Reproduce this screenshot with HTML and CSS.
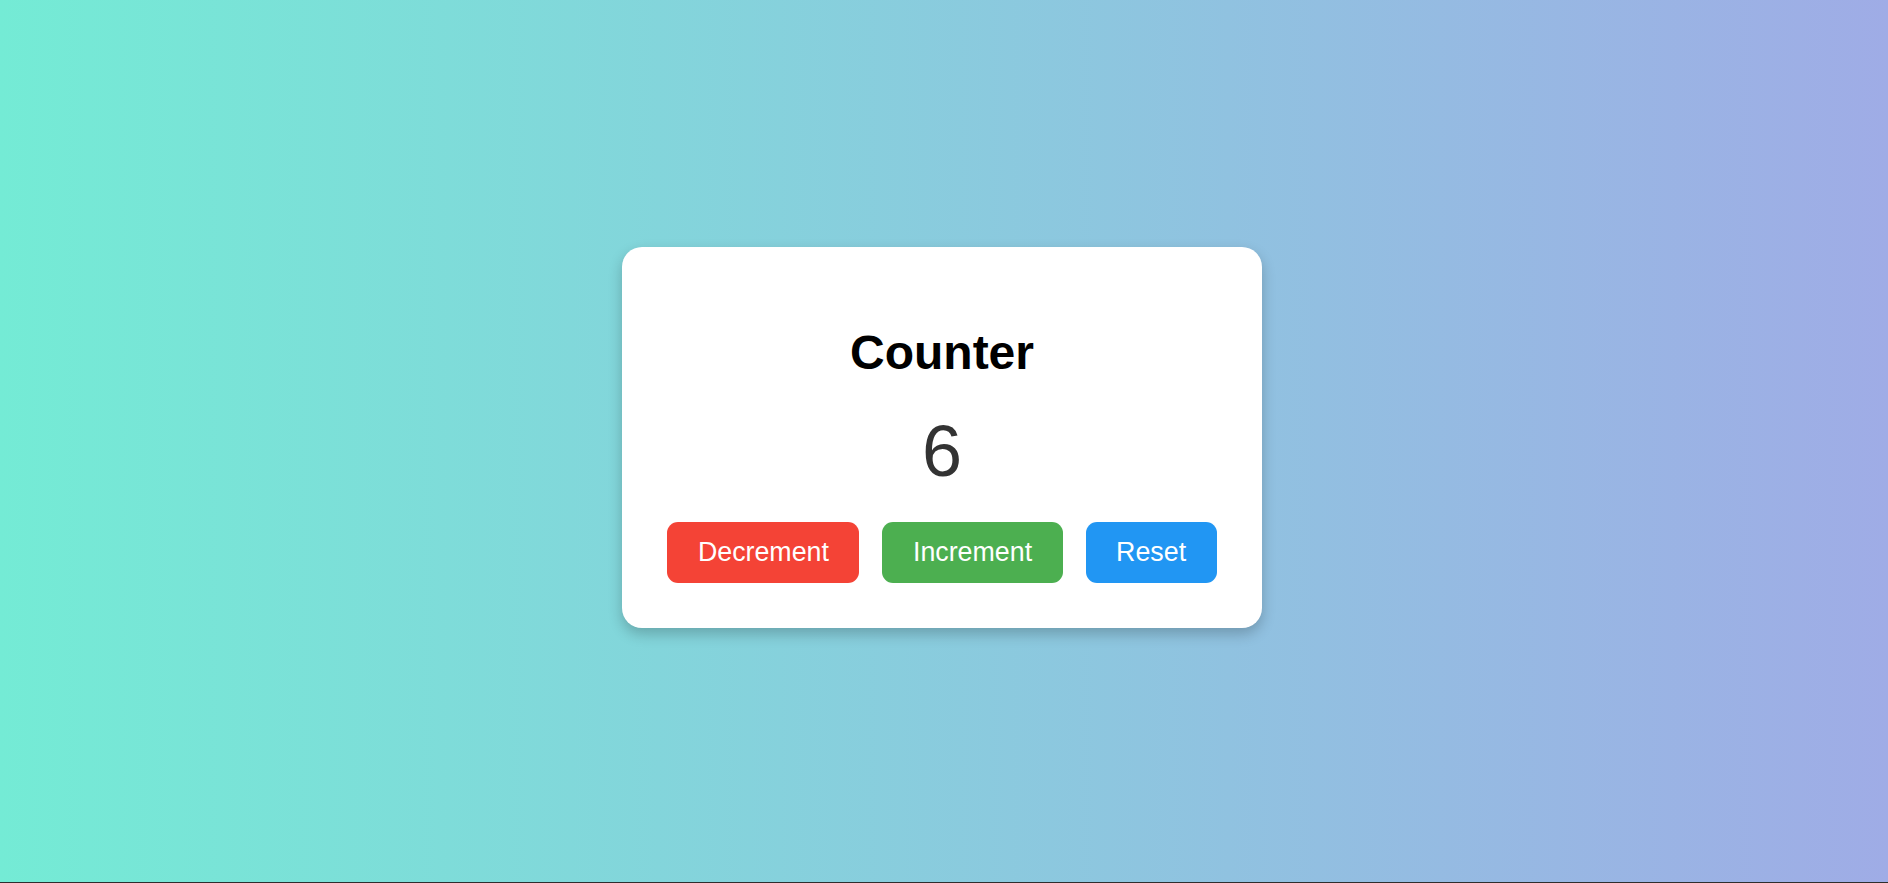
FILE: index.html
```html
<!DOCTYPE html>
<html lang="en">
<head>
<meta charset="utf-8">
<title>Counter</title>
<link rel="stylesheet" href="styles.css">
</head>
<body>
<main class="page">
  <section class="card">
    <h1 class="title">Counter</h1>
    <div class="count">6</div>
    <div class="actions">
      <button class="btn btn-dec">Decrement</button>
      <button class="btn btn-inc">Increment</button>
      <button class="btn btn-reset">Reset</button>
    </div>
  </section>
</main>
</body>
</html>
```

FILE: styles.css
```css
html {
  background: #2e2e2e;
  height: 100%;
}
body {
  margin: 0;
  height: 882px;
  font-family: "Liberation Sans", Arial, sans-serif;
  background: linear-gradient(to right, #74ebd5, #9face6);
}
.page {
  box-sizing: border-box;
  height: 882px;
  padding: 0 4px 8px 0;
  display: flex;
  align-items: center;
  justify-content: center;
}
.card {
  background: #fff;
  border-radius: 20px;
  padding: 45px;
  box-shadow: 0 6px 14px rgba(0, 0, 0, 0.22);
  text-align: center;
}
.title {
  margin: 34px 0 30px;
  font-size: 48px;
  font-weight: bold;
  color: #000;
  line-height: 54px;
}
.count {
  font-size: 72px;
  line-height: 83px;
  color: #333;
  margin-bottom: 29px;
}
.actions {
  display: flex;
  justify-content: center;
  gap: 23px;
}
.btn {
  font-family: "Liberation Sans", Arial, sans-serif;
  font-size: 26.8px;
  line-height: 31px;
  height: 61px;
  padding: 15px 30.5px;
  border: none;
  border-radius: 11px;
  color: #fff;
  cursor: pointer;
}
.btn-dec { background: #f44336; }
.btn-inc { background: #4caf50; }
.btn-reset { background: #2196f3; }
```
